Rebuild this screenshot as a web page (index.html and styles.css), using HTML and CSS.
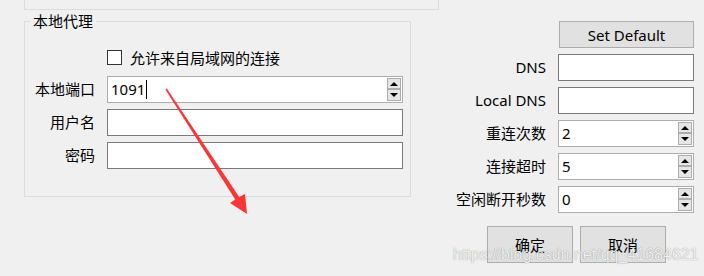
FILE: index.html
```html
<!DOCTYPE html>
<html>
<head>
<meta charset="utf-8">
<link rel="stylesheet" href="styles.css">
</head>
<body>
<div class="top-frame"></div>
<div class="main">
  <div class="group">
    <span class="group-title">本地代理</span>
    <div class="check-row">
      <span class="checkbox"></span>
      <span class="check-label">允许来自局域网的连接</span>
    </div>
    <div class="form-grid left-grid">
      <label class="lbl">本地端口</label>
      <div class="field spin light"><span class="val">1091</span><span class="caret"></span><div class="spin-btns"><span class="sbtn"><i class="up"></i></span><span class="sbtn"><i class="down"></i></span></div></div>
      <label class="lbl">用户名</label>
      <div class="field"></div>
      <label class="lbl">密码</label>
      <div class="field"></div>
    </div>
  </div>
  <div class="right">
    <div class="form-grid right-grid">
      <span></span>
      <button class="btn set-default">Set Default</button>
      <label class="lbl">DNS</label>
      <div class="field"></div>
      <label class="lbl">Local DNS</label>
      <div class="field"></div>
      <label class="lbl">重连次数</label>
      <div class="field spin light"><span class="val">2</span><div class="spin-btns"><span class="sbtn"><i class="up"></i></span><span class="sbtn"><i class="down"></i></span></div></div>
      <label class="lbl">连接超时</label>
      <div class="field spin light"><span class="val">5</span><div class="spin-btns"><span class="sbtn"><i class="up"></i></span><span class="sbtn"><i class="down"></i></span></div></div>
      <label class="lbl">空闲断开秒数</label>
      <div class="field spin light"><span class="val">0</span><div class="spin-btns"><span class="sbtn"><i class="up"></i></span><span class="sbtn"><i class="down"></i></span></div></div>
    </div>
    <div class="btn-row">
      <button class="btn action">确定</button>
      <button class="btn action">取消</button>
    </div>
  </div>
</div>
<svg class="arrow" width="704" height="276" viewBox="0 0 704 276">
  <polygon points="165.4,89.6 166.8,88.6 239.2,197 245,194 247,214 230,203 235.2,199.6" fill="#f93636"/>
</svg>
<div class="watermark">https://blog.csdn.net/qq_41684621</div>
</body>
</html>
```
FILE: styles.css
```css
* { box-sizing: border-box; }
html, body { margin: 0; padding: 0; }
body {
  width: 704px;
  height: 276px;
  overflow: hidden;
  background: #f0f0f0;
  font-family: "Noto Sans", "Noto Sans CJK SC", sans-serif;
  font-size: 15px;
  color: #000;
  position: relative;
}
.top-frame {
  margin-left: 24px;
  width: 415px;
  height: 10px;
  border: 1px solid #dcdcdc;
  border-top: none;
}
.main {
  display: flex;
  margin-top: 11px;
}
.group {
  margin-left: 24px;
  width: 387px;
  height: 176px;
  border: 1px solid #dcdcdc;
  display: flex;
  flex-direction: column;
}
.group-title {
  align-self: flex-start;
  margin-top: -11px;
  margin-left: 5px;
  padding: 0 3px;
  height: 20px;
  line-height: 20px;
  background: #f0f0f0;
  font-family: "Noto Sans CJK SC", sans-serif;
}
.check-row {
  display: flex;
  align-items: center;
  margin-top: 19px;
  margin-left: 82px;
  height: 15px;
}
.checkbox {
  width: 15px;
  height: 15px;
  border: 1px solid #333;
  background: #fff;
}
.check-label {
  margin-left: 8px;
  line-height: 15px;
  font-family: "Noto Sans CJK SC", sans-serif;
}
.form-grid {
  display: grid;
  row-gap: 6px;
  column-gap: 12px;
  grid-auto-rows: 27px;
  align-items: center;
}
.left-grid {
  margin-top: 11px;
  grid-template-columns: 70px 296px;
}
.lbl {
  text-align: right;
  line-height: 27px;
  font-family: "Noto Sans", "Noto Sans CJK SC", sans-serif;
  white-space: nowrap;
}
.field {
  height: 27px;
  background: #fff;
  border: 1px solid #7a7a7a;
  display: flex;
  align-items: center;
  position: relative;
}
.field.light { border-color: #adadad; }
.val {
  padding-left: 3px;
  line-height: 25px;
}
.caret {
  width: 1px;
  height: 19px;
  background: #000;
  margin-left: 1px;
}
.spin-btns {
  margin-left: auto;
  margin-right: 1px;
  display: flex;
  flex-direction: column;
  gap: 0;
}
.sbtn {
  width: 14px;
  height: 11px;
  background: #e6e6e6;
  border: 1px solid #adadad;
  display: flex;
  align-items: center;
  justify-content: center;
}
.sbtn + .sbtn { height: 12px; }
.up, .down {
  width: 0;
  height: 0;
  border-left: 4px solid transparent;
  border-right: 4px solid transparent;
}
.up { border-bottom: 4px solid #000; }
.down { border-top: 4px solid #000; }
.right {
  margin-left: auto;
  margin-right: 10px;
  display: flex;
  flex-direction: column;
}
.right-grid {
  grid-template-columns: auto 136px;
}
.btn {
  font-family: "Noto Sans", "Noto Sans CJK SC", sans-serif;
  font-size: 15px;
  color: #000;
  background: #e1e1e1;
  border: 1px solid #adadad;
  padding: 0;
  margin: 0;
}
.set-default {
  height: 27px;
  margin-left: 1px;
}
.btn-row {
  display: flex;
  justify-content: flex-end;
  gap: 7px;
  margin-top: 13px;
  padding-right: 28px;
}
.action {
  width: 86px;
  height: 37px;
  font-family: "Noto Sans CJK SC", sans-serif;
}
.arrow {
  position: absolute;
  left: 0;
  top: 0;
  pointer-events: none;
}
.watermark {
  position: absolute;
  left: 453px;
  top: 246px;
  font-family: "Liberation Sans", sans-serif;
  font-size: 16px;
  color: rgba(255, 255, 255, 0.9);
  text-shadow: 0 0 1px rgba(0, 0, 0, 0.5);
  pointer-events: none;
}
```
